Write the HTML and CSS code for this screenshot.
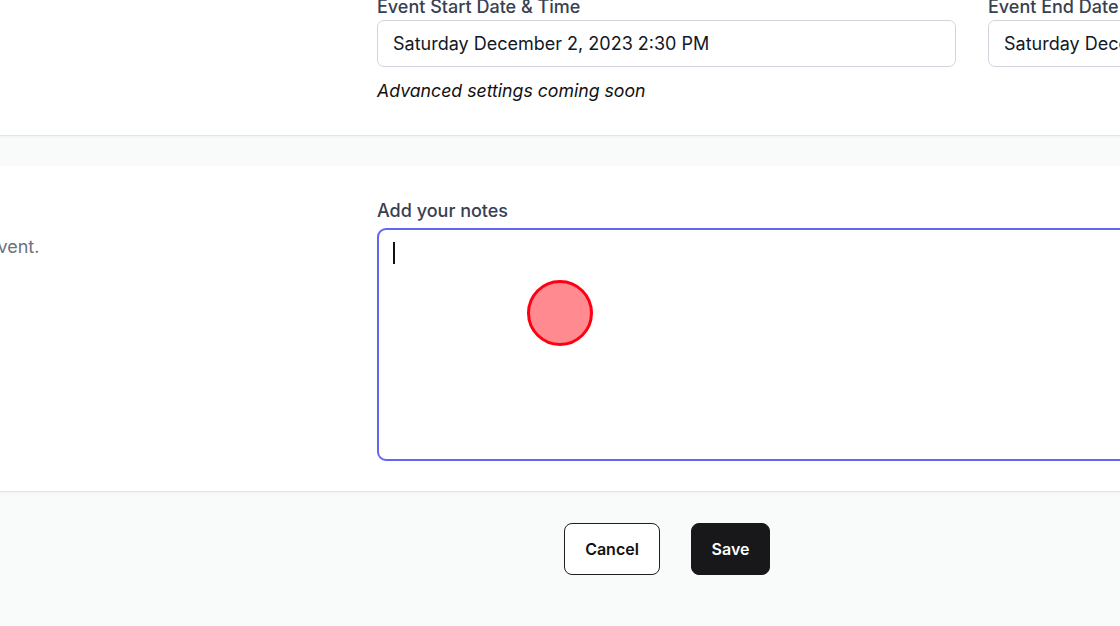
FILE: index.html
```html
<!DOCTYPE html>
<html>
<head>
<meta charset="utf-8">
<link rel="stylesheet" href="styles.css">
</head>
<body>
<div class="page">
  <section class="card card-top">
    <div class="col-left">
      <h3 class="sec-title">Date &amp; Time</h3>
      <p class="sec-desc">Set the start and end.</p>
    </div>
    <div class="col-right">
      <div class="fields">
        <div class="field">
          <label class="label">Event Start Date &amp; Time</label>
          <div class="input">Saturday December 2, 2023 2:30 PM</div>
        </div>
        <div class="field">
          <label class="label">Event End Date &amp; Time</label>
          <div class="input">Saturday December 2, 2023 5:30 PM</div>
        </div>
      </div>
      <p class="note">Advanced settings coming soon</p>
    </div>
  </section>
  <div class="spacer"></div>
  <section class="card card-notes">
    <div class="col-left">
      <h3 class="sec-title">Notes</h3>
      <p class="sec-desc notes-desc">Add any additional notes for this event.</p>
    </div>
    <div class="col-right">
      <label class="label">Add your notes</label>
      <div class="textarea"><span class="caret"></span></div>
    </div>
  </section>
  <div class="footer">
    <button class="btn btn-cancel">Cancel</button>
    <button class="btn btn-save">Save</button>
  </div>
</div>
<div class="click-dot"></div>
</body>
</html>
```
FILE: styles.css
```css
html, body {
  margin: 0;
  padding: 0;
  background: #f9fafa;
  overflow: hidden;
  width: 1120px;
  height: 626px;
  font-family: "Inter", "Liberation Sans", sans-serif;
}
.page {
  margin: -38px 0 0 -400px;
  width: 2200px;
}
.card {
  background: #ffffff;
  display: grid;
  grid-template-columns: 697px 1fr;
  column-gap: 32px;
  padding-left: 48px;
  border-bottom: 1px solid #e3e5e8;
  box-shadow: 0 1px 2px rgba(0,0,0,0.04);
}
.card-top {
  padding-top: 32px;
  padding-bottom: 33px;
}
.card-notes {
  padding-top: 34px;
  padding-bottom: 30px;
}
.spacer {
  height: 30px;
}
.sec-title {
  margin: 0 0 12px;
  font-size: 20px;
  font-weight: 600;
  color: #111827;
}
.sec-desc {
  margin: 0;
  font-size: 18px;
  color: #6b7280;
  white-space: nowrap;
}
.notes-desc {
  margin-left: 60px;
}
.fields {
  display: flex;
  gap: 32px;
}
.field {
  width: 579px;
  display: flex;
  flex-direction: column;
}
.label {
  display: block;
  font-size: 18px;
  line-height: 22px;
  font-weight: 500;
  color: #374151;
  margin-bottom: 4px;
}
.field .label {
  margin-top: 2px;
  margin-bottom: 2px;
}
.card-notes .label {
  margin-bottom: 6px;
}
.input {
  box-sizing: border-box;
  height: 47px;
  border: 1px solid #d1d5db;
  border-radius: 7px;
  padding: 0 15px;
  display: flex;
  align-items: center;
  font-size: 18px;
  color: #111827;
  white-space: nowrap;
  overflow: hidden;
}
.note {
  margin: 13px 0 0;
  font-style: italic;
  font-size: 17.7px;
  line-height: 22px;
  color: #111111;
}
.textarea {
  box-sizing: border-box;
  width: 1190px;
  height: 233px;
  border: 2px solid #6366f1;
  border-radius: 9px;
  padding: 12px 14px;
}
.caret {
  display: block;
  width: 1.5px;
  height: 22px;
  background: #111111;
}
.footer {
  display: flex;
  gap: 31px;
  padding: 31px 0 60px 964px;
}
.btn {
  box-sizing: border-box;
  height: 52px;
  border-radius: 8px;
  font-family: "Inter", "Liberation Sans", sans-serif;
  font-size: 16px;
  font-weight: 600;
  cursor: pointer;
}
.btn-cancel {
  width: 96px;
  background: #ffffff;
  border: 1px solid #1f1f1f;
  color: #111111;
}
.btn-save {
  width: 79px;
  background: #18181b;
  border: 1px solid #18181b;
  color: #ffffff;
}
.click-dot {
  position: absolute;
  left: 527px;
  top: 280px;
  width: 66px;
  height: 66px;
  box-sizing: border-box;
  border-radius: 50%;
  background: #ff8a8f;
  border: 3px solid #ff0013;
}
```
